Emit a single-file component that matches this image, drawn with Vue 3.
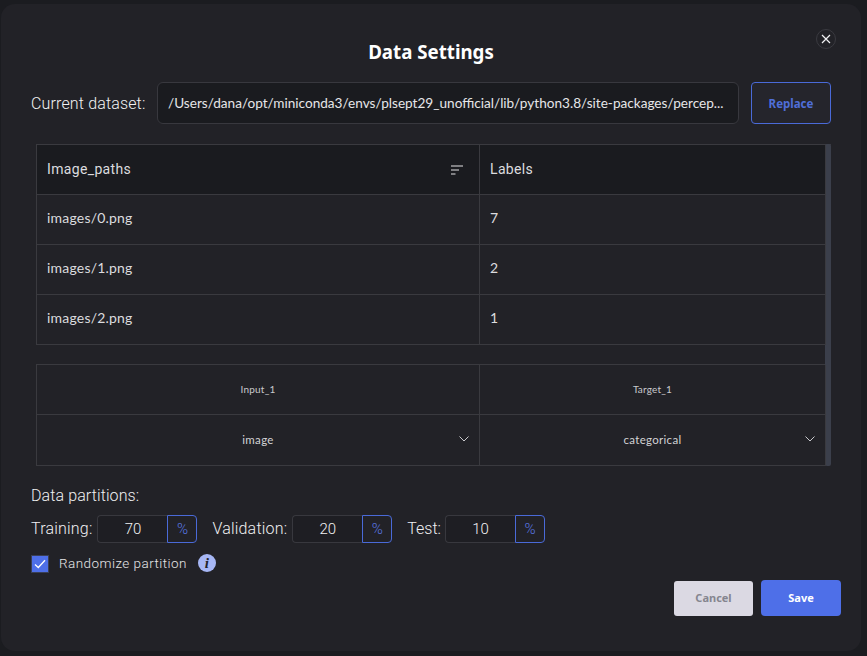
<script setup>
const rows = [
  { path: "images/0.png", label: "7" },
  { path: "images/1.png", label: "2" },
  { path: "images/2.png", label: "1" },
];

const columns = [
  { name: "Input_1", type: "image" },
  { name: "Target_1", type: "categorical" },
];

const partitions = [
  { name: "Training:", value: 70 },
  { name: "Validation:", value: 20 },
  { name: "Test:", value: 10 },
];
</script>

<template>
  <div class="page">
    <div class="modal">
      <button class="close" aria-label="Close">
        <svg width="10" height="10" viewBox="0 0 10 10">
          <path d="M1 1l8 8M9 1l-8 8" stroke="#f2f2f4" stroke-width="1.2" fill="none" />
        </svg>
      </button>

      <h1 class="title">Data Settings</h1>

      <div class="dataset">
        <span class="dataset-label">Current dataset:</span>
        <div class="dataset-path">/Users/dana/opt/miniconda3/envs/plsept29_unofficial/lib/python3.8/site-packages/percep...</div>
        <button class="replace">Replace</button>
      </div>

      <div class="tables">
        <div class="scrollbar"></div>

        <div class="grid preview">
          <div class="cell head">
            Image_paths
            <svg class="sort" width="12" height="10" viewBox="0 0 12 10">
              <path d="M0 1h12M0 5h8M0 9h4.500" stroke="#e4e4e6" stroke-width="1" fill="none" />
            </svg>
          </div>
          <div class="cell head">Labels</div>
          <template v-for="row in rows" :key="row.path">
            <div class="cell">{{ row.path }}</div>
            <div class="cell">{{ row.label }}</div>
          </template>
        </div>

        <div class="grid types">
          <div v-for="col in columns" :key="col.name" class="cell name">{{ col.name }}</div>
          <div v-for="col in columns" :key="col.type" class="cell type">
            {{ col.type }}
            <svg class="chevron" width="10" height="6" viewBox="0 0 10 6">
              <path d="M.5 .5L5 5l4.500-4.500" stroke="#c9c9cd" stroke-width="1" fill="none" />
            </svg>
          </div>
        </div>
      </div>

      <div class="partitions-title">Data partitions:</div>
      <div class="partitions">
        <div v-for="p in partitions" :key="p.name" class="partition">
          <span class="partition-name">{{ p.name }}</span>
          <div class="partition-value">{{ p.value }}</div>
          <div class="partition-unit">%</div>
        </div>
      </div>

      <div class="randomize">
        <span class="checkbox">
          <svg width="12" height="10" viewBox="0 0 12 10">
            <path d="M1 5.500L4.300 8.500L11 1.200" stroke="#fff" stroke-width="1.300" fill="none" />
          </svg>
        </span>
        <span class="randomize-label">Randomize partition</span>
        <span class="info">i</span>
      </div>

      <div class="actions">
        <button class="cancel">Cancel</button>
        <button class="save">Save</button>
      </div>
    </div>
  </div>
</template>

<style>
html,
body {
  margin: 0;
  background: #1b1c20;
}
</style>

<style scoped>
.page {
  width: 867px;
  height: 656px;
  box-sizing: border-box;
  padding: 4px 6px 5px 1px;
  overflow: hidden;
}

.modal {
  position: relative;
  height: 100%;
  box-sizing: border-box;
  padding: 36px 30px 0;
  background: #222227;
  border-radius: 14px;
  color: #e6e6e8;
  font-family: Roboto, sans-serif;
}

.close {
  position: absolute;
  top: 25px;
  right: 25px;
  width: 20px;
  height: 20px;
  padding: 0;
  display: flex;
  align-items: center;
  justify-content: center;
  background: transparent;
  border: 1px solid #3a3a40;
  border-radius: 50%;
}

.title {
  margin: 0;
  height: 24px;
  line-height: 24px;
  text-align: center;
  font-family: "Noto Sans", sans-serif;
  font-size: 18.700px;
  font-weight: 700;
  color: #fff;
}

.dataset {
  display: flex;
  align-items: center;
  margin-top: 18px;
}

.dataset-label {
  width: 126px;
  font-size: 16px;
  font-weight: 300;
  letter-spacing: 0.15px;
  color: #f2f2f3;
}

.dataset-path {
  width: 582px;
  height: 42px;
  box-sizing: border-box;
  padding: 0 10px;
  line-height: 40px;
  background: #1a1b1f;
  border: 1px solid #38383e;
  border-radius: 6px;
  font-family: Lato, sans-serif;
  font-size: 13.600px;
  white-space: nowrap;
  overflow: hidden;
}

.replace {
  width: 80px;
  height: 42px;
  margin-left: 12px;
  padding: 0;
  background: #25252c;
  border: 1px solid #4a6ad8;
  border-radius: 4px;
  color: #4f6ed8;
  font-family: "Noto Sans", sans-serif;
  font-size: 11.500px;
  font-weight: 700;
}

.tables {
  position: relative;
  width: 795px;
  margin: 20px 0 0 5px;
}

.scrollbar {
  position: absolute;
  top: 0;
  right: 0;
  bottom: 0;
  width: 6px;
  background: #3b3f4b;
  border-radius: 2px;
}

.grid {
  display: grid;
  grid-template-columns: 443px 346px;
  border-top: 1px solid #3a3a3f;
  border-left: 1px solid #3a3a3f;
}

.cell {
  position: relative;
  height: 50px;
  box-sizing: border-box;
  padding: 0 10px 5px;
  display: flex;
  align-items: center;
  border-right: 1px solid #3a3a3f;
  border-bottom: 1px solid #3a3a3f;
  font-family: Lato, sans-serif;
  font-size: 14px;
  letter-spacing: 0.2px;
  color: #dcdcdf;
}

.head {
  padding-bottom: 1px;
  font-family: Roboto, sans-serif;
  font-size: 14px;
  letter-spacing: 0.35px;
  background: #1a1b1f;
}

.sort {
  position: absolute;
  right: 16px;
  top: 20px;
}

.types {
  margin-top: 19px;
}

.name,
.type {
  padding-bottom: 2px;
  justify-content: center;
}

.name {
  font-size: 10px;
  color: #c9c9cd;
}

.type {
  height: 51px;
  font-size: 11.500px;
  letter-spacing: 0.3px;
  color: #d2d2d5;
}

.chevron {
  position: absolute;
  right: 10px;
  top: 21px;
}

.partitions-title {
  margin-top: 20px;
  font-size: 16px;
  font-weight: 300;
  letter-spacing: 0.1px;
  line-height: 19px;
  color: #f0f0f2;
}

.partitions {
  display: flex;
  gap: 15px;
  margin-top: 10px;
}

.partition {
  display: flex;
  align-items: center;
}

.partition-name {
  margin-right: 5px;
  padding-bottom: 2px;
  font-size: 16px;
  font-weight: 300;
  letter-spacing: 0.2px;
  color: #f0f0f2;
}

.partition:last-child .partition-name {
  margin-right: 4px;
  letter-spacing: 0;
}

.partition-value {
  width: 70px;
  height: 28px;
  box-sizing: border-box;
  line-height: 26px;
  text-align: center;
  background: #1e1e23;
  border: 1px solid #38383e;
  border-right: 0;
  border-radius: 4px 0 0 4px;
  font-size: 15px;
  font-weight: 300;
  color: #f2f2f3;
}

.partition-unit {
  width: 30px;
  height: 28px;
  box-sizing: border-box;
  line-height: 26px;
  text-align: center;
  border: 1px solid #4a6ad8;
  border-radius: 0 4px 4px 0;
  font-size: 15px;
  font-weight: 300;
  color: #5a78e4;
}

.randomize {
  display: flex;
  align-items: center;
  margin-top: 10px;
}

.checkbox {
  width: 18px;
  height: 18px;
  box-sizing: border-box;
  margin-top: 2px;
  display: flex;
  align-items: center;
  justify-content: center;
  background: #4e6fe8;
  border: 1px solid #3a3f55;
}

.randomize-label {
  margin-left: 10px;
  font-size: 13.500px;
  font-weight: 300;
  letter-spacing: 0.45px;
  color: #e6e6e8;
}

.info {
  width: 18px;
  height: 18px;
  margin-left: 11px;
  border-radius: 50%;
  background: #a7b7f5;
  color: #22222a;
  text-align: center;
  line-height: 18px;
  font-family: "Liberation Serif", serif;
  font-size: 15px;
  font-style: italic;
  font-weight: 700;
}

.actions {
  position: absolute;
  right: 20px;
  bottom: 35px;
  display: flex;
  align-items: center;
  gap: 8px;
}

.actions button {
  padding: 0 0 2px;
  font-family: "Noto Sans", sans-serif;
  font-size: 11px;
  font-weight: 700;
  border: 0;
}

.cancel {
  width: 79px;
  height: 35px;
  background: #dbd9e3;
  border-radius: 3px;
  color: #85858f;
}

.save {
  width: 80px;
  height: 36px;
  background: #4e6fe8;
  border-radius: 4px;
  color: #fff;
}
</style>
